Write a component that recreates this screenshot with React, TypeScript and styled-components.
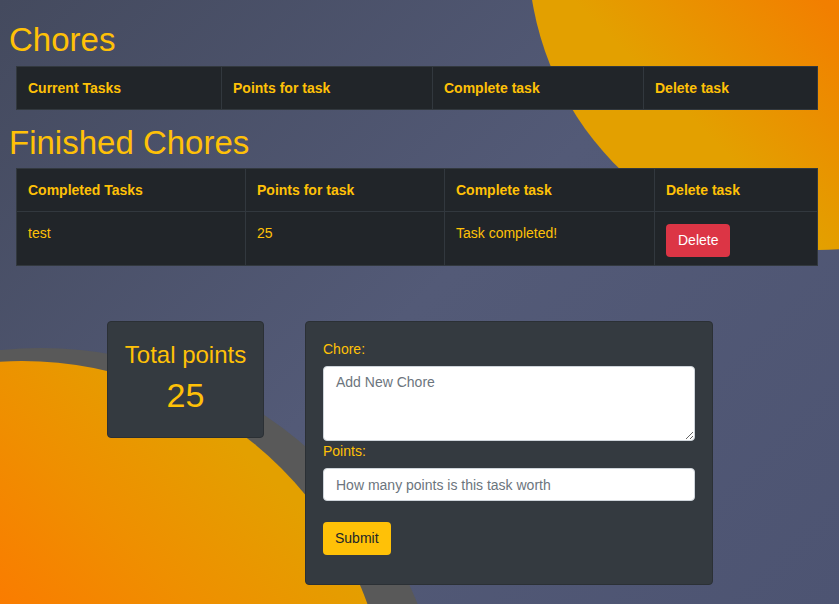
import React from "react";
import styled, { createGlobalStyle } from "styled-components";

const GlobalStyle = createGlobalStyle`
  html, body {
    margin: 0;
    padding: 0;
    height: 100%;
  }
  body {
    font-family: "Liberation Sans", Arial, sans-serif;
    background: #4b5169;
  }
  * {
    box-sizing: border-box;
  }
`;

type Column = { label: string; width: number };

const currentColumns: Column[] = [
  { label: "Current Tasks", width: 205 },
  { label: "Points for task", width: 211 },
  { label: "Complete task", width: 211 },
  { label: "Delete task", width: 174 },
];

const finishedColumns: Column[] = [
  { label: "Completed Tasks", width: 229 },
  { label: "Points for task", width: 199 },
  { label: "Complete task", width: 210 },
  { label: "Delete task", width: 163 },
];

const finished = [{ name: "test", points: 25 }];

const App = () => {
  return (
    <Page>
      <GlobalStyle />
      <TopBlobClip>
        <TopBlob />
      </TopBlobClip>
      <Ring />
      <BottomBlob />

      <Content>
        <Heading>Chores</Heading>
        <Table>
          <colgroup>
            {currentColumns.map((c) => (
              <Col key={c.label} $width={c.width} />
            ))}
          </colgroup>
          <thead>
            <tr>
              {currentColumns.map((c) => (
                <Th key={c.label}>{c.label}</Th>
              ))}
            </tr>
          </thead>
        </Table>

        <Heading>Finished Chores</Heading>
        <Table>
          <colgroup>
            {finishedColumns.map((c) => (
              <Col key={c.label} $width={c.width} />
            ))}
          </colgroup>
          <thead>
            <tr>
              {finishedColumns.map((c) => (
                <Th key={c.label}>{c.label}</Th>
              ))}
            </tr>
          </thead>
          <tbody>
            {finished.map((task) => (
              <tr key={task.name}>
                <Td>{task.name}</Td>
                <Td>{task.points}</Td>
                <Td>Task completed!</Td>
                <Td>
                  <Button $variant="danger">Delete</Button>
                </Td>
              </tr>
            ))}
          </tbody>
        </Table>

        <Bottom>
          <TotalCard>
            <TotalTitle>Total points</TotalTitle>
            <TotalValue>25</TotalValue>
          </TotalCard>

          <FormCard>
            <Label htmlFor="chore">Chore:</Label>
            <TextArea id="chore" placeholder="Add New Chore" />
            <Label htmlFor="points">Points:</Label>
            <Input id="points" placeholder="How many points is this task worth" />
            <Button $variant="warning" $submit>
              Submit
            </Button>
          </FormCard>
        </Bottom>
      </Content>
    </Page>
  );
};

export default App;

const Page = styled.div`
  position: relative;
  min-height: 100vh;
  overflow: hidden;
  background: linear-gradient(135deg, #444a5e 0%, #535a77 50%, #4d5472 100%);
`;

const TopBlobClip = styled.div`
  position: absolute;
  top: 0;
  left: 0;
  right: 0;
  height: 250px;
  overflow: hidden;
  pointer-events: none;
`;

const TopBlob = styled.div`
  position: absolute;
  left: 528px;
  top: -350px;
  width: 580px;
  height: 600px;
  border-radius: 50%;
  background: linear-gradient(
    45deg,
    #e3a000 0%,
    #e3a000 25%,
    #f27f00 46%,
    #ff7700 70%
  );
`;

const Ring = styled.div`
  position: absolute;
  left: -364px;
  top: 348px;
  width: 810px;
  height: 810px;
  border-radius: 50%;
  background: #595959;
  pointer-events: none;
`;

const BottomBlob = styled.div`
  position: absolute;
  left: -345px;
  top: 361px;
  width: 734px;
  height: 734px;
  border-radius: 50%;
  background: linear-gradient(
    45deg,
    #ff7000 0%,
    #fa7c00 57%,
    #ef8f00 70%,
    #e3a000 84%
  );
  pointer-events: none;
`;

const Content = styled.div`
  position: relative;
  z-index: 1;
  padding: 20px 8px 0;
`;

const Heading = styled.h1`
  margin: 0 0 6px 1px;
  font-size: 33px;
  font-weight: 500;
  line-height: 1.2;
  color: #ffc107;
`;

const Table = styled.table`
  width: 801px;
  margin: 0 0 13px 8px;
  border-collapse: collapse;
  table-layout: fixed;
  background: #212529;
  border: 1px solid #32383e;
  color: #ffc107;
  font-size: 14px;
`;

const Col = styled.col<{ $width: number }>`
  width: ${(p) => p.$width}px;
`;

const Th = styled.th`
  padding: 12px 12px 12px 11px;
  text-align: left;
  font-weight: 700;
  line-height: 18px;
  border: 1px solid #32383e;
`;

const Td = styled.td`
  padding: 12px 12px 8px 11px;
  vertical-align: top;
  line-height: 18px;
  border: 1px solid #32383e;
`;

const Button = styled.button<{ $variant: "danger" | "warning"; $submit?: boolean }>`
  display: inline-block;
  font-family: inherit;
  font-size: 14px;
  line-height: 21px;
  padding: 6px 12px;
  margin-top: ${(p) => (p.$submit ? "21px" : "0")};
  border: 0;
  border-radius: 4px;
  cursor: pointer;
  background: ${(p) => (p.$variant === "danger" ? "#dc3545" : "#ffc107")};
  color: ${(p) => (p.$variant === "danger" ? "#ffffff" : "#212529")};
`;

const Bottom = styled.div`
  display: flex;
  align-items: flex-start;
  gap: 41px;
  margin-top: 55px;
  padding-left: 99px;
`;

const TotalCard = styled.div`
  width: 157px;
  padding: 18px 0 22px;
  text-align: center;
  background: #343a40;
  border: 1px solid #2b3035;
  border-radius: 4px;
  color: #ffc107;
`;

const TotalTitle = styled.div`
  font-size: 24px;
  line-height: 29px;
`;

const TotalValue = styled.div`
  margin-top: 6px;
  font-size: 34px;
  line-height: 40px;
`;

const FormCard = styled.form`
  display: flex;
  flex-direction: column;
  align-items: flex-start;
  width: 408px;
  padding: 17px 17px 29px;
  background: #343a40;
  border: 1px solid #2b3035;
  border-radius: 4px;
`;

const Label = styled.label`
  display: block;
  margin-bottom: 6px;
  font-size: 14px;
  line-height: 21px;
  color: #ffc107;
`;

const fieldStyles = `
  width: 100%;
  font-family: "Liberation Sans", Arial, sans-serif;
  font-size: 14px;
  line-height: 21px;
  color: #495057;
  background: #ffffff;
  border: 1px solid #ced4da;
  border-radius: 4px;
  padding: 5px 12px;
  outline: none;
  &::placeholder {
    color: #6c757d;
  }
`;

const TextArea = styled.textarea`
  ${fieldStyles}
  display: block;
  height: 75px;
  margin: 0;
`;

const Input = styled.input`
  ${fieldStyles}
  height: 33px;
  margin: 0;
`;
